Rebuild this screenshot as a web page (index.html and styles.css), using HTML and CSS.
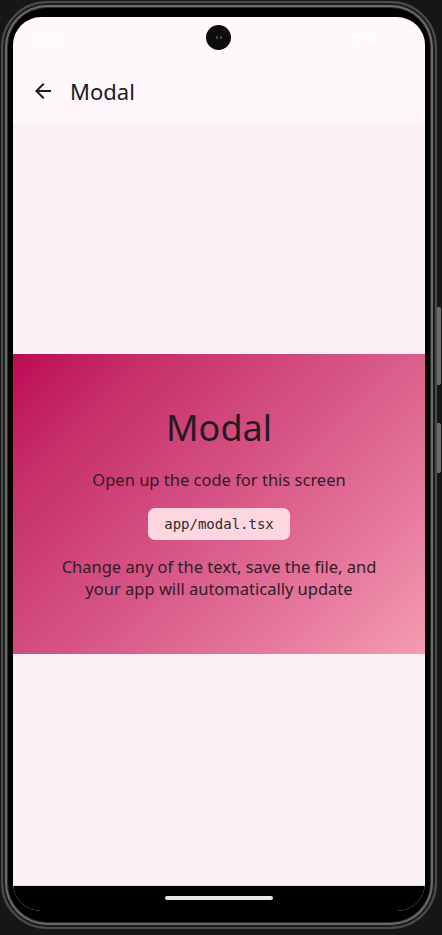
FILE: index.html
```html
<!DOCTYPE html>
<html lang="en">
<head>
    <meta charset="UTF-8">
    <meta name="viewport" content="width=device-width, initial-scale=1">
    <title>Modal</title>
    <link rel="stylesheet" href="styles.css">
</head>
<body>
<div class="device">
    <div class="screen">
        <!-- Status bar (white on white, as in the emulator) -->
        <div class="status">
            <span class="clock">11:31</span>
            <span class="camera"><i></i><i></i></span>
            <span class="status-icons">
                <svg width="12" height="10" viewBox="0 0 12 10"><path d="M6 10L0 3a9 9 0 0 1 12 0z" fill="#fff"/></svg>
                <svg width="7" height="11" viewBox="0 0 7 11"><rect x="0" y="1" width="7" height="10" rx="1" fill="#fff"/></svg>
            </span>
        </div>

        <!-- App bar -->
        <header class="appbar">
            <button class="back-btn" aria-label="Back">
                <svg width="24" height="24" viewBox="0 0 24 24"><path d="M20 11H7.83l5.59-5.59L12 4l-8 8 8 8 1.41-1.41L7.83 13H20v-2z" fill="#1d1b20"/></svg>
            </button>
            <h1>Modal</h1>
        </header>

        <!-- Screen content -->
        <main class="content">
            <section class="hero">
                <h2>Modal</h2>
                <p>Open up the code for this screen</p>
                <code class="path">app/modal.tsx</code>
                <p class="note">Change any of the text, save the file, and your app will automatically update</p>
            </section>
        </main>

        <div class="navbar"><span class="home-pill"></span></div>
    </div>
    <span class="side-btn volume"></span>
    <span class="side-btn power"></span>
</div>
</body>
</html>
```

FILE: styles.css
```css
* { box-sizing: border-box; }
body {
  margin: 0;
  background: #161616;
  font-family: 'Noto Sans', sans-serif;
}
/* Phone frame */
.device {
  position: relative;
  width: 436px;
  height: 928px;
  margin: 1px 0 0 1px;
  padding: 14px 10px 16px;
  border: 2px solid #4b4b4b;
  border-radius: 46px;
  background: #000;
  box-shadow: inset 0 0 0 2px #1c1c1c, inset 0 0 0 4px #6a6a6a, inset 0 0 0 5px #2c2c2c;
}
.side-btn {
  position: absolute;
  right: -6px;
  width: 4px;
  background: #6b6b6b;
  border-radius: 0 2px 2px 0;
}
.side-btn.volume { top: 304px; height: 78px; }
.side-btn.power { top: 420px; height: 50px; }
.screen {
  height: 894px;
  border-radius: 28px;
  overflow: hidden;
  background: #fef7fc;
  display: flex;
  flex-direction: column;
}
/* Status bar */
.status {
  position: relative;
  height: 42px;
  display: flex;
  align-items: center;
  justify-content: space-between;
  padding: 0 50px 2px 23px;
  color: #fff;
  font-size: 12px;
}
.status-icons { display: flex; gap: 5px; align-items: center; }
.camera {
  position: absolute;
  left: 193px;
  top: 8px;
  width: 25px;
  height: 25px;
  border-radius: 50%;
  background: #0d0d0d;
  display: flex;
  justify-content: center;
  align-items: center;
  gap: 2px;
}
.camera i {
  width: 2px;
  height: 3px;
  border-radius: 1px;
  background: #6b4a2a;
}
/* App bar */
.appbar {
  height: 64px;
  display: flex;
  align-items: center;
  padding: 0 0 1px 18px;
  gap: 15px;
}
.back-btn {
  border: none;
  background: none;
  padding: 0;
  width: 24px;
  height: 24px;
  display: flex;
}
.appbar h1 {
  margin: 0;
  font-size: 22px;
  font-weight: 400;
  color: #1d1b20;
}
/* Content */
.content {
  flex: 1;
  background: #fcf0f7;
  border-bottom: 1px solid #e6d3df;
  display: flex;
  align-items: center;
}
.hero {
  width: 100%;
  height: 300px;
  padding-bottom: 4px;
  background: linear-gradient(135deg, #bc0a56 0%, #c62d68 18%, #d75586 50%, #e77a9e 78%, #f39db2 100%);
  display: flex;
  flex-direction: column;
  align-items: center;
  justify-content: center;
  gap: 16px;
  text-align: center;
  color: #321c27;
}
.hero h2 {
  margin: 0 0 1px;
  font-size: 36px;
  font-weight: 400;
  line-height: 46px;
  color: #261a20;
}
.hero p {
  margin: 0;
  font-size: 16.5px;
  line-height: 24px;
}
.hero .note {
  max-width: 340px;
  line-height: 22px;
}
.path {
  background: #fdd6df;
  border-radius: 7px;
  padding: 0 16px;
  height: 32px;
  line-height: 32px;
  font-family: 'DejaVu Sans Mono', monospace;
  font-size: 14px;
  color: #2e2a2c;
}
/* Gesture nav */
.navbar {
  height: 25px;
  background: #000;
  display: flex;
  justify-content: center;
  padding-top: 10px;
}
.home-pill {
  width: 108px;
  height: 4px;
  border-radius: 2px;
  background: #e8e8e8;
}
```
